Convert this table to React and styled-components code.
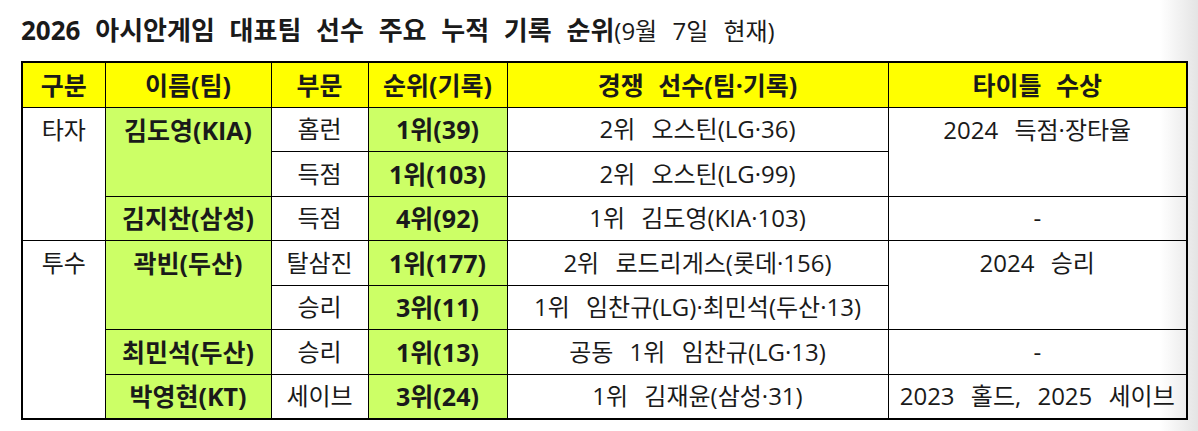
import React from "react"
import styled, { createGlobalStyle } from "styled-components"

const GlobalStyle = createGlobalStyle`
  html, body {
    margin: 0;
    padding: 0;
  }
  body {
    width: 1198px;
    height: 431px;
    overflow: hidden;
    font-family: "Open Sans", "Noto Sans CJK KR", sans-serif;
    color: #1a1a1a;
    background: linear-gradient(to right, #ffffff 1160px, #e4e4e4 1198px);
  }
`

const Page = styled.div`
  padding: 13px 0 0 21px;
`

const Title = styled.h1`
  margin: 0 0 13px;
  font-size: 26px;
  line-height: 34px;
  font-weight: 700;
  word-spacing: 8px;
  white-space: nowrap;
`

const Sub = styled.span`
  font-size: 24px;
  font-weight: 400;
  word-spacing: 9px;
`

const Table = styled.table`
  border-collapse: collapse;
  table-layout: fixed;
  width: 1165px;
  border: 2px solid #000;
`

const Th = styled.th`
  background: #ffff00;
  border: 1px solid #000;
  height: 43.5px;
  padding: 0;
  font-size: 25px;
  line-height: 30px;
  font-weight: 700;
  word-spacing: 8px;
  white-space: nowrap;
`

const Td = styled.td`
  background: ${p => (p.$green ? "#ccff66" : "transparent")};
  border: 1px solid #000;
  height: 43.5px;
  padding: ${p => (p.$top ? "7px 0 0" : "0")};
  vertical-align: ${p => (p.$top ? "top" : "middle")};
  text-align: center;
  font-size: ${p => (p.$bold ? "25px" : "24px")};
  line-height: 30px;
  font-weight: ${p => (p.$bold ? 700 : 400)};
  word-spacing: 10px;
  white-space: nowrap;
`

const widths = [83, 166, 97, 139, 381, 299]

export default function App() {
  return (
    <>
      <GlobalStyle />
      <Page>
        <Title>
          2026 아시안게임 대표팀 선수 주요 누적 기록 순위<Sub>(9월 7일 현재)</Sub>
        </Title>
        <Table>
          <colgroup>
            {widths.map((w, i) => (
              <col key={i} style={{ width: w }} />
            ))}
          </colgroup>
          <thead>
            <tr>
              <Th>구분</Th>
              <Th>이름(팀)</Th>
              <Th>부문</Th>
              <Th>순위(기록)</Th>
              <Th>경쟁 선수(팀·기록)</Th>
              <Th>타이틀 수상</Th>
            </tr>
          </thead>
          <tbody>
            <tr>
              <Td rowSpan={3} $top>타자</Td>
              <Td rowSpan={2} $top $green $bold>김도영(KIA)</Td>
              <Td>홈런</Td>
              <Td $green $bold>1위(39)</Td>
              <Td>2위 오스틴(LG·36)</Td>
              <Td rowSpan={2} $top>2024 득점·장타율</Td>
            </tr>
            <tr>
              <Td>득점</Td>
              <Td $green $bold>1위(103)</Td>
              <Td>2위 오스틴(LG·99)</Td>
            </tr>
            <tr>
              <Td $green $bold>김지찬(삼성)</Td>
              <Td>득점</Td>
              <Td $green $bold>4위(92)</Td>
              <Td>1위 김도영(KIA·103)</Td>
              <Td>-</Td>
            </tr>
            <tr>
              <Td rowSpan={4} $top>투수</Td>
              <Td rowSpan={2} $top $green $bold>곽빈(두산)</Td>
              <Td>탈삼진</Td>
              <Td $green $bold>1위(177)</Td>
              <Td>2위 로드리게스(롯데·156)</Td>
              <Td rowSpan={2} $top>2024 승리</Td>
            </tr>
            <tr>
              <Td>승리</Td>
              <Td $green $bold>3위(11)</Td>
              <Td>1위 임찬규(LG)·최민석(두산·13)</Td>
            </tr>
            <tr>
              <Td $green $bold>최민석(두산)</Td>
              <Td>승리</Td>
              <Td $green $bold>1위(13)</Td>
              <Td>공동 1위 임찬규(LG·13)</Td>
              <Td>-</Td>
            </tr>
            <tr>
              <Td $green $bold>박영현(KT)</Td>
              <Td>세이브</Td>
              <Td $green $bold>3위(24)</Td>
              <Td>1위 김재윤(삼성·31)</Td>
              <Td>2023 홀드, 2025 세이브</Td>
            </tr>
          </tbody>
        </Table>
      </Page>
    </>
  )
}
